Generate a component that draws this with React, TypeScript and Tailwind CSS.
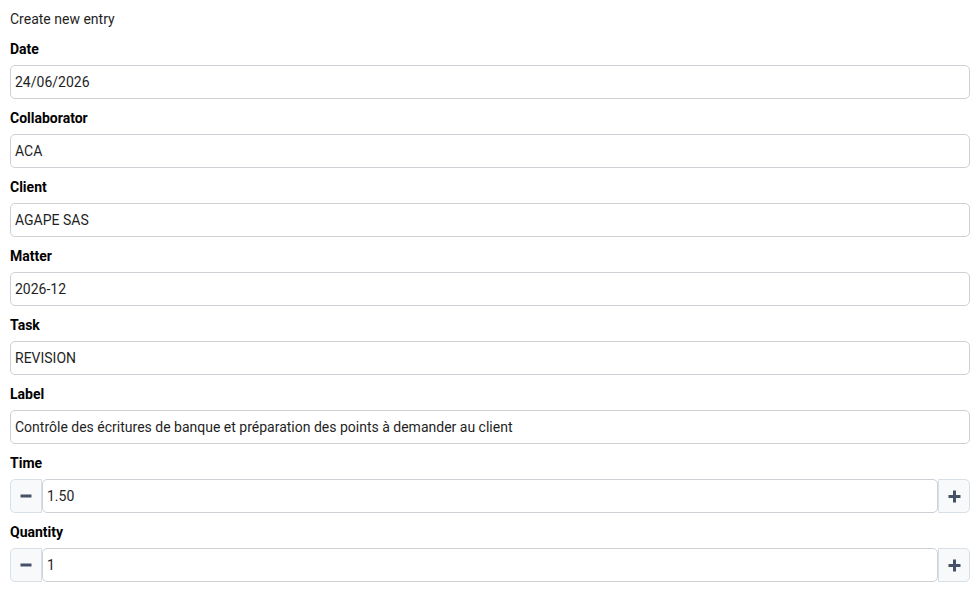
import React, { useState } from 'react';

const font = { fontFamily: 'Roboto, "Liberation Sans", sans-serif' };

type Field = { label: string; value: string };

const fields: Field[] = [
  { label: 'Date', value: '24/06/2026' },
  { label: 'Collaborator', value: 'ACA' },
  { label: 'Client', value: 'AGAPE SAS' },
  { label: 'Matter', value: '2026-12' },
  { label: 'Task', value: 'REVISION' },
  { label: 'Label', value: 'Contrôle des écritures de banque et préparation des points à demander au client' },
];

function MinusIcon() {
  return (
    <svg width="12" height="12" viewBox="0 0 12 12">
      <rect x="0.5" y="4.5" width="11" height="3" fill="#455266" />
    </svg>
  );
}

function PlusIcon() {
  return (
    <svg width="13" height="13" viewBox="0 0 13 13">
      <rect x="0.5" y="5" width="12" height="3" fill="#455266" />
      <rect x="5" y="0.5" width="3" height="12" fill="#455266" />
    </svg>
  );
}

function Stepper({ value, step, decimals }: { value: number; step: number; decimals: number }) {
  const [v, setV] = useState(value);
  return (
    <div className="flex h-[34px]">
      <button
        onClick={() => setV(v - step)}
        className="w-[32px] h-full flex items-center justify-center bg-[#f7f9fb] border border-[#d9dfe6] rounded-l-[5px]"
      >
        <MinusIcon />
      </button>
      <input
        value={v.toFixed(decimals)}
        onChange={(e) => setV(parseFloat(e.target.value) || 0)}
        className="flex-1 min-w-0 h-full px-[4px] text-[14px] text-[#1f1f1f] bg-white border border-[#cdd0d5] rounded-[5px] outline-none"
      />
      <button
        onClick={() => setV(v + step)}
        className="w-[32px] h-full flex items-center justify-center bg-[#f7f9fb] border border-[#d9dfe6] rounded-r-[5px]"
      >
        <PlusIcon />
      </button>
    </div>
  );
}

export default function App() {
  return (
    <div className="min-h-screen bg-white px-[10px] pt-[9px] text-[14px] text-[#1f1f1f]" style={font}>
      <div className="leading-[20px] mb-[10px]">Create new entry</div>

      <div className="flex flex-col gap-[9px]">
        {fields.map((f) => (
          <div key={f.label}>
            <div className="font-bold leading-[20px] mb-[6px] text-black">{f.label}</div>
            <input
              defaultValue={f.value}
              className="w-full h-[34px] px-[4px] text-[14px] text-[#1f1f1f] bg-white border border-[#cdd0d5] rounded-[5px] outline-none"
            />
          </div>
        ))}

        <div>
          <div className="font-bold leading-[20px] mb-[6px] text-black">Time</div>
          <Stepper value={1.5} step={0.25} decimals={2} />
        </div>

        <div>
          <div className="font-bold leading-[20px] mb-[6px] text-black">Quantity</div>
          <Stepper value={1} step={1} decimals={0} />
        </div>
      </div>
    </div>
  );
}
